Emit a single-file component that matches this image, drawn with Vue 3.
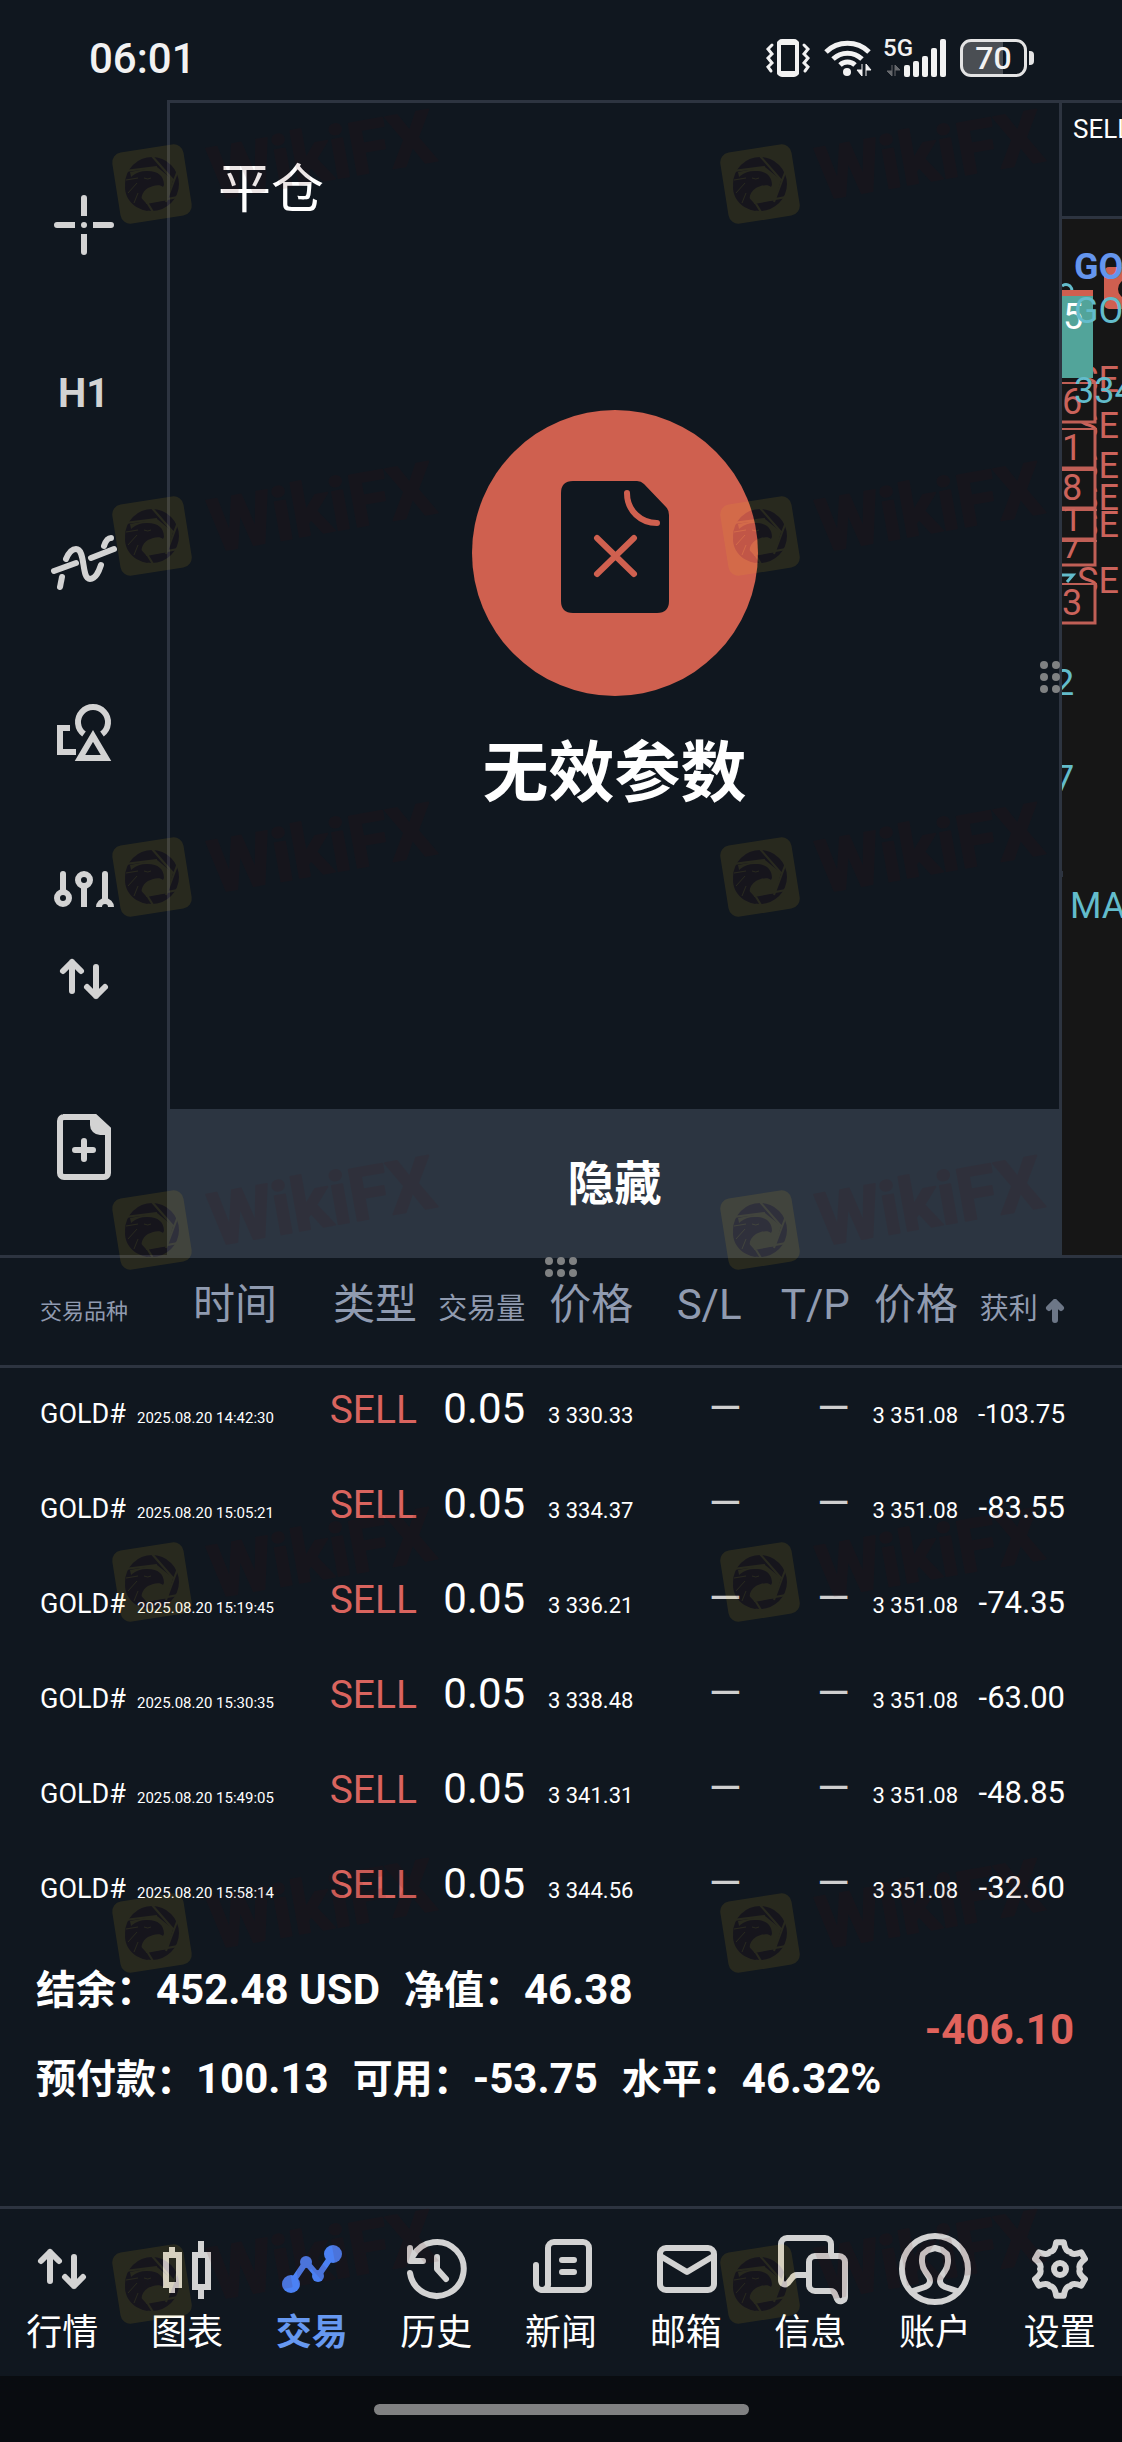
<script setup>
const orders = [
  { time: '2025.08.20 14:42:30', open: '3 330.33', profit: '-103.75' },
  { time: '2025.08.20 15:05:21', open: '3 334.37', profit: '-83.55' },
  { time: '2025.08.20 15:19:45', open: '3 336.21', profit: '-74.35' },
  { time: '2025.08.20 15:30:35', open: '3 338.48', profit: '-63.00' },
  { time: '2025.08.20 15:49:05', open: '3 341.31', profit: '-48.85' },
  { time: '2025.08.20 15:58:14', open: '3 344.56', profit: '-32.60' },
]

const summary = [
  [['结余：', '452.48 USD'], ['净值：', '46.38']],
  [['预付款：', '100.13'], ['可用：', '-53.75'], ['水平：', '46.32%']],
]

// Six-lobed gear outline around (36, 36)
function gearPath() {
  const at = (deg, r) => {
    const a = (deg * Math.PI) / 180
    return `${(36 + r * Math.cos(a)).toFixed(1)} ${(36 + r * Math.sin(a)).toFixed(1)}`
  }
  let d = `M${at(-98, 27)}`
  for (let i = 0; i < 6; i++) {
    const lobe = -90 + i * 60
    d += `L${at(lobe + 8, 27)}Q${at(lobe + 17, 18)} ${at(lobe + 30, 20)}Q${at(lobe + 43, 18)} ${at(lobe + 52, 27)}`
  }
  return d + 'Z'
}

const arrows = ['M24 19V48M15 28L24 19L33 28', 'M48 24V53M39 44L48 53L57 44']

const tabs = [
  { label: '行情', paths: arrows },
  { label: '图表', square: true, paths: ['M15 22H28V52H15Z', 'M21 14V20M21 54V60', 'M44 22H57V54H44Z', 'M50 8V20M50 56V66'] },
  { label: '交易', active: true, paths: ['M15 51L30 29L42 43L57 21'], dots: [[15, 51, 9], [30, 29, 6], [42, 43, 6], [57, 21, 9]] },
  { label: '历史', paths: ['M10 40A27 27 0 1 0 13 23', 'M10 15V28H23', 'M37 24V36L46 46'] },
  { label: '新闻', paths: ['M23 50V15a6 6 0 0 1 6-6H58a6 6 0 0 1 6 6V51a6 6 0 0 1-6 6H17a6 6 0 0 1-6-6V32', 'M23 50a6 6 0 0 1-6 7', 'M37 27H49M37 39H49'] },
  { label: '邮箱', paths: ['M16 15H58a6 6 0 0 1 6 6V51a6 6 0 0 1-6 6H16a6 6 0 0 1-6-6V21a6 6 0 0 1 6-6Z', 'M12 24L37 39L62 24'] },
  { label: '信息', paths: ['M57 22V11a6 6 0 0 0-6-6H13a6 6 0 0 0-6 6V47c0 4 4 6 7 3l4-5a6 6 0 0 1 5-3H33', 'M41 23H65a6 6 0 0 1 6 6V64c0 4-6 6-8 2l-2-5a5 5 0 0 0-5-3H41a6 6 0 0 1-6-6V29a6 6 0 0 1 6-6Z'] },
  { label: '账户', paths: ['M36 3a33 33 0 1 1 0 66a33 33 0 1 1 0-66Z', 'M14 58L26 54C31 52 32 48 30 44L26 38C23 34 22 26 24 21L29 17L36 15L43 17L48 21C50 26 49 34 46 38L42 44C40 48 41 52 46 54L58 58'] },
  { label: '设置', paths: [gearPath(), 'M36 30a6 6 0 1 1 0 12a6 6 0 1 1 0-12Z'] },
]

// Order labels on the price chart; the digit is clipped by its box
const priceBoxes = [
  { top: 163, height: 42, digit: '6', base: 32 },
  { top: 209, height: 42, digit: '1', base: 32 },
  { top: 250, height: 41, digit: '8', base: 31 },
  { top: 290, height: 32, digit: '1', base: 22 },
  { top: 321, height: 27, digit: '7', base: 18 },
  { top: 364, height: 42, digit: '3', base: 32 },
]
const sellMarks = [173, 219, 259, 291, 318, 374]

const watermarkRows = [184, 536, 877, 1230, 1582, 1933, 2284]
const watermarkColumns = [152, 760]
const watermarks = watermarkRows.flatMap((y) => watermarkColumns.map((x) => ({ x, y })))
</script>

<template>
  <div class="app">
    <header class="status">
      <time class="clock">06:01</time>
      <div class="indicators">
        <svg width="46" height="38" viewBox="0 0 46 38" fill="none" stroke="#f2f2f2" stroke-width="3" stroke-linecap="round">
          <rect x="14" y="2" width="18" height="34" rx="3" stroke-width="4" />
          <path d="M14 4H32M14 34H32" stroke-width="4" />
          <path d="M7 6L3 10L7 15L3 19L7 24L3 28L6 32M39 6L43 10L39 15L43 19L39 24L43 28L40 32" />
        </svg>
        <svg width="48" height="38" viewBox="0 0 48 38" fill="none" stroke="#f2f2f2" stroke-width="5">
          <path d="M2 13A31 31 0 0 1 45 13M9 20A21 21 0 0 1 38 20M16 26A11 11 0 0 1 31 26" />
          <circle cx="23" cy="33" r="4" fill="#f2f2f2" stroke="none" />
          <path d="M38 25V37L33 31H38M42 37V25L47 31H42" fill="#f2f2f2" stroke-width="1" />
        </svg>
        <div class="signal">
          <span class="network">5G</span>
          <svg width="62" height="38" viewBox="0 0 62 38">
            <path d="M7 26V37L2 32H7M10 37V26L15 31H10" fill="#66696d" stroke="#66696d" />
            <g fill="#f2f2f2">
              <rect x="19" y="26" width="6" height="12" rx="2" />
              <rect x="28" y="22" width="6" height="16" rx="2" />
              <rect x="37" y="17" width="6" height="21" rx="2" />
              <rect x="46" y="9" width="6" height="29" rx="2" />
              <rect x="55" y="0" width="6" height="38" rx="2" />
            </g>
          </svg>
        </div>
        <div class="battery">
          <span class="level">70</span>
        </div>
      </div>
    </header>

    <section class="workspace">
      <aside class="tools">
        <div class="tool-group scroll">
          <button class="tool" aria-label="十字线">
            <svg width="60" height="60" viewBox="0 0 60 60">
              <path d="M30 3V12M30 57V48M3 30H12M57 30H48" stroke-linecap="round" />
              <path d="M30 10V21M30 50V39M10 30H21M50 30H39" />
              <circle cx="30" cy="30" r="3" fill="currentColor" stroke="none" />
            </svg>
          </button>
          <button class="tool period">H1</button>
          <button class="tool" aria-label="指标">
            <svg width="60" height="60" viewBox="0 0 60 60" stroke-linecap="round">
              <path d="M6 54L8 44" />
              <path d="M12 26C15 19 18 16 22 16C32 16 27 46 36 46C42 46 45 38 47 32" />
              <path d="M50 13C52 7 54 5 57 5M0 38L22 30M37 25L60 16" />
            </svg>
          </button>
          <button class="tool" aria-label="对象">
            <svg width="60" height="60" viewBox="0 0 60 60">
              <path d="M30 32A15 15 0 1 1 48 32" />
              <path d="M39 34L52 56H26Z" />
              <path d="M16 26H6V50H22" />
            </svg>
          </button>
          <button class="tool" aria-label="参数">
            <svg width="60" height="60" viewBox="0 0 60 60" stroke-linecap="round">
              <path d="M9 3V19M30 16V57M51 3V28" />
              <circle cx="9" cy="27" r="6" />
              <circle cx="30" cy="9" r="6" />
              <circle cx="51" cy="36" r="6" />
            </svg>
          </button>
        </div>
        <div class="tool-group actions">
          <button class="tool" aria-label="买卖">
            <svg width="72" height="72" viewBox="0 0 72 72" stroke-linecap="round" stroke-linejoin="round">
              <path v-for="d in arrows" :key="d" :d="d" />
            </svg>
          </button>
          <button class="tool" aria-label="新订单">
            <svg width="60" height="66" viewBox="0 0 60 66">
              <path d="M9 3H41L54 15V59a4 4 0 0 1-4 4H10a4 4 0 0 1-4-4V7a4 4 0 0 1 4-4Z" />
              <path d="M36 3H41L54 15V21H46a10 10 0 0 1-10-10Z" fill="currentColor" stroke="none" />
              <path d="M30 27V45M21 36H39" stroke-linecap="round" />
            </svg>
          </button>
        </div>
      </aside>

      <main class="dialog">
        <h1 class="title">平仓</h1>
        <div class="badge">
          <svg width="108" height="132" viewBox="0 0 108 132">
            <path d="M12 0H76q4 0 7 3L105 26q3 3 3 8V120q0 12-12 12H12q-12 0-12-12V12Q0 0 12 0Z" fill="#10171f" />
            <path d="M66 12C66 30 80 42 96 42M36 57L73 93M73 57L36 93" fill="none" stroke="#cf604f" stroke-width="6" stroke-linecap="round" />
          </svg>
        </div>
        <p class="message">无效参数</p>
        <button class="hide">隐藏</button>
        <svg class="grip-side" width="20" height="32" viewBox="0 0 20 32" fill="#7f8182">
          <template v-for="y in [4, 16, 28]" :key="y">
            <circle cx="4" :cy="y" r="4" />
            <circle cx="16" :cy="y" r="4" />
          </template>
        </svg>
      </main>

      <aside class="chart">
        <div class="quote">SELL</div>
        <svg class="plot" width="60" height="1036" font-size="36">
          <path d="M0 67q4-3 8 0q2 2 2 5" fill="none" stroke="#63bccb" stroke-width="3" />
          <rect x="42" y="48" width="30" height="42" rx="5" fill="#cf5f50" />
          <circle cx="66" cy="70" r="8" fill="none" stroke="#161616" stroke-width="4" />
          <text x="12" y="60" fill="#6495ed" font-weight="700">GO</text>
          <rect y="71" width="31" height="7" fill="#cf5f50" />
          <g fill="#cb635b">
            <text v-for="y in sellMarks" :key="y" x="15" :y="y">SE</text>
          </g>
          <rect y="77" width="31" height="82" fill="#52a49a" />
          <text x="1" y="110" fill="#fff">5</text>
          <text x="12" y="104" fill="#63bccb">GO</text>
          <svg v-for="box in priceBoxes" :key="box.top" :y="box.top" width="35" :height="box.height" overflow="hidden">
            <rect x="-20" y="-2" width="53" :height="box.height" fill="#161616" stroke="#c05f56" stroke-width="3" />
            <path d="M-5 0H35" stroke="#c05f56" stroke-width="4" />
            <text x="0" :y="box.base" fill="#cb635b">{{ box.digit }}</text>
          </svg>
          <g fill="#63bccb">
            <path d="M0 356H11L5 363" fill="none" stroke="#63bccb" stroke-width="3" />
            <text x="12" y="184">334</text>
            <text x="-8" y="476">2</text>
            <text x="-8" y="572">7</text>
            <text x="8" y="699">MA</text>
          </g>
          <rect y="652" width="1" height="6" fill="#2d3440" />
        </svg>
      </aside>
    </section>

    <section class="positions">
      <svg class="grip-top" width="32" height="20" viewBox="0 0 32 20" fill="#7f8182">
        <template v-for="x in [4, 16, 28]" :key="x">
          <circle :cx="x" cy="4" r="4" />
          <circle :cx="x" cy="16" r="4" />
        </template>
      </svg>
      <table>
        <colgroup>
          <col class="c-symbol" /><col class="c-time" /><col class="c-type" /><col /><col /><col /><col /><col /><col class="c-profit" />
        </colgroup>
        <thead>
          <tr>
            <th class="symbol tiny">交易品种</th>
            <th>时间</th>
            <th>类型</th>
            <th class="medium">交易量</th>
            <th>价格</th>
            <th>S/L</th>
            <th>T/P</th>
            <th>价格</th>
            <th class="profit medium">
              获利
              <svg width="20" height="24" viewBox="0 0 20 24" fill="none" stroke="#6d7787" stroke-width="6" stroke-linecap="round" stroke-linejoin="round">
                <path d="M10 21V5M4 9L10 3L16 9" />
              </svg>
            </th>
          </tr>
        </thead>
        <tbody>
          <tr v-for="order in orders" :key="order.time">
            <td class="symbol">GOLD#</td>
            <td class="time">{{ order.time }}</td>
            <td class="type">SELL</td>
            <td>0.05</td>
            <td class="price">{{ order.open }}</td>
            <td class="none">—</td>
            <td class="none">—</td>
            <td class="price">3 351.08</td>
            <td class="profit" :class="{ long: order.profit.length > 6 }">{{ order.profit }}</td>
          </tr>
        </tbody>
      </table>
      <div class="summary">
        <div class="balance">
          <p v-for="(line, i) in summary" :key="i">
            <span v-for="[label, value] in line" :key="label">{{ label }}<b>{{ value }}</b></span>
          </p>
        </div>
        <strong class="total">-406.10</strong>
      </div>
    </section>

    <nav class="tabs">
      <a v-for="tab in tabs" :key="tab.label" href="#" class="tab" :class="{ active: tab.active, square: tab.square }">
        <svg width="72" height="72" viewBox="0 0 72 72">
          <path v-for="d in tab.paths" :key="d" :d="d" />
          <circle v-for="[x, y, r] in tab.dots" :key="x" :cx="x" :cy="y" :r="r" fill="currentColor" stroke="none" />
        </svg>
        <span>{{ tab.label }}</span>
      </a>
    </nav>
    <footer class="home"><span class="home-bar"></span></footer>

    <svg class="watermarks" aria-hidden="true">
      <g v-for="mark in watermarks" :key="`${mark.x}-${mark.y}`" opacity="0.1" :transform="`translate(${mark.x} ${mark.y})`">
        <rect x="-36" y="-36" width="72" height="72" rx="10" fill="#fac81e" transform="rotate(-9)" />
        <circle r="27" fill="#500a0a" />
        <path d="M-22 -12L5 -17L21 -4L15 16L-6 19L-18 6Z" fill="#fac81e" />
        <path d="M0 -28L21 -4M-27 -13L5 -17M26 -14L14 18M26 13L-6 19M1 28L-7 15" stroke="#fac81e" stroke-width="2" />
        <path d="M-27 3C-25 -6 -15 -14 -4 -13C6 -13 12 -8 12 1L11 3C8 0 2 1 -4 4C-10 8 -12 14 -9 20L-4 27C-18 25 -27 15 -27 3Z" fill="#500a0a" />
        <path d="M-26 -4L-14 -6M-24 9L-15 -1M-18 19L-14 9M-8 -6Q-4 -4 -1 -6" fill="none" stroke="#fac81e" stroke-width="1" />
        <text x="62" y="16" transform="rotate(-10 62 16)" class="mark-text">WikiFX</text>
      </g>
    </svg>
  </div>
</template>

<style>
body {
  margin: 0;
  background: #10171f;
}
</style>

<style scoped>
.app {
  position: relative;
  overflow: hidden;
  background: #10171f;
  color: #fff;
  font-family: Roboto, "Noto Sans CJK SC", sans-serif;
}

button {
  padding: 0;
  border: 0;
  background: none;
  color: inherit;
  font-family: inherit;
}

.status {
  display: flex;
  justify-content: space-between;
  align-items: center;
  box-sizing: border-box;
  height: 100px;
  padding: 16px 88px 0 89px;
  color: #f2f2f2;
}

.clock {
  font-size: 42px;
  font-weight: 500;
}

.indicators {
  display: flex;
  align-items: center;
  gap: 13px;
}

.signal {
  position: relative;
  height: 38px;
}

.network {
  position: absolute;
  top: 0;
  left: -2px;
  font-size: 24px;
  font-weight: 500;
  line-height: 18px;
}

.battery {
  position: relative;
  display: flex;
  justify-content: center;
  align-items: center;
  box-sizing: border-box;
  width: 67px;
  height: 38px;
  margin-right: 7px;
  border: 3px solid #e4e4e4;
  border-radius: 11px;
  background: linear-gradient(90deg, #4a4e53 66%, #10171f 66%);
}

.battery::after {
  content: "";
  position: absolute;
  top: 9px;
  right: -10px;
  width: 5px;
  height: 14px;
  border-radius: 0 4px 4px 0;
  background: #e4e4e4;
}

.level {
  font-size: 32px;
  font-weight: 500;
  line-height: 32px;
}

.workspace {
  display: grid;
  grid-template-columns: 167px 1fr 60px;
}

.tools {
  border-bottom: 3px solid #2d3440;
  color: #d3d3d3;
}

.tool-group {
  display: flex;
  flex-direction: column;
}

.scroll {
  box-sizing: border-box;
  height: 807px;
  padding-top: 40px;
  overflow: hidden;
}

.tool {
  display: flex;
  flex-shrink: 0;
  justify-content: center;
  align-items: center;
  height: 169px;
}

.actions {
  gap: 24px;
}

.actions .tool {
  height: 144px;
}

.tool svg {
  overflow: visible;
  fill: none;
  stroke: currentColor;
  stroke-width: 6px;
}

.period {
  font-family: "Liberation Sans Narrow", Roboto, sans-serif;
  font-size: 40px;
  font-weight: 700;
}

.dialog {
  position: relative;
  display: flex;
  flex-direction: column;
  align-items: center;
  border: 3px solid #2d3440;
  border-bottom: 0;
}

.title {
  align-self: flex-start;
  margin: 57px 0 0 48px;
  font-size: 53px;
  font-weight: 400;
  line-height: 60px;
}

.badge {
  display: flex;
  justify-content: center;
  align-items: center;
  box-sizing: border-box;
  width: 286px;
  height: 286px;
  margin-top: 190px;
  padding-bottom: 12px;
  border-radius: 50%;
  background: #cf604f;
}

.message {
  margin: 38px 0 295px;
  font-size: 66px;
  font-weight: 700;
  line-height: 80px;
}

.hide {
  align-self: stretch;
  height: 149px;
  margin: 0 -3px;
  background: #2c3541;
  font-size: 47px;
  font-weight: 700;
  line-height: 48px;
}

.grip-side {
  position: absolute;
  top: 558px;
  right: -1px;
}

.chart {
  display: flex;
  flex-direction: column;
  overflow: hidden;
  border-top: 3px solid #2d3440;
  border-bottom: 3px solid #2d3440;
  background: #161616;
}

.quote {
  box-sizing: border-box;
  height: 116px;
  padding: 8px 0 0 11px;
  border-bottom: 3px solid #2d3440;
  background: #10171f;
  font-size: 26px;
  line-height: 36px;
}

.plot {
  display: block;
  overflow: hidden;
}

.positions {
  position: relative;
}

.grip-top {
  position: absolute;
  top: -1px;
  left: 50%;
  transform: translateX(-50%);
}

table {
  width: 100%;
  border-spacing: 0;
  table-layout: fixed;
}

.c-symbol {
  width: 127px;
}

.c-time {
  width: 150px;
}

.c-type {
  width: 140px;
}

.c-profit {
  width: 164px;
}

th,
td {
  padding: 16px 0 0;
  font-size: 42px;
  font-weight: 400;
  line-height: 49px;
  text-align: right;
  vertical-align: baseline;
  white-space: nowrap;
}

th {
  height: 85px;
  padding-top: 22px;
  border-bottom: 3px solid #2d3440;
  color: #909bb0;
}

td {
  height: 79px;
}

th.tiny {
  font-size: 22px;
}

th.medium {
  font-size: 29px;
}

th svg {
  margin-bottom: -4px;
}

.symbol {
  padding-left: 40px;
  font-size: 27px;
  text-align: left;
}

.time {
  padding-left: 10px;
  font-size: 15px;
  text-align: left;
}

.type {
  color: #d9645e;
  font-size: 39px;
}

.price {
  font-size: 22px;
}

.none {
  color: #cfcfcf;
}

.profit {
  padding-right: 57px;
  font-size: 31px;
}

.profit.long {
  font-size: 26px;
}

.summary {
  display: flex;
  justify-content: space-between;
  align-items: center;
  padding: 0 48px 82px 36px;
}

.balance {
  padding-top: 8px;
}

.balance p {
  display: flex;
  gap: 24px;
  margin: 0;
  font-size: 40px;
  font-weight: 700;
  line-height: 89px;
}

.balance b {
  font-size: 42px;
  font-weight: 700;
  line-height: 1;
}

.total {
  margin-bottom: 4px;
  color: #e0635c;
  font-size: 42px;
  font-weight: 700;
}

.tabs {
  display: grid;
  grid-template-columns: repeat(9, 1fr);
  border-top: 3px solid #2d3440;
}

.tab {
  display: flex;
  flex-direction: column;
  align-items: center;
  gap: 4px;
  padding: 24px 0 19px;
  color: #fff;
  font-size: 36px;
  line-height: 48px;
  text-decoration: none;
}

.tab svg {
  overflow: visible;
  color: #d3d3d3;
  fill: none;
  stroke: currentColor;
  stroke-width: 6px;
  stroke-linecap: round;
  stroke-linejoin: round;
}

.tab.square svg {
  stroke-linecap: butt;
  stroke-linejoin: miter;
}

.tab.active {
  color: #6698f0;
  font-weight: 700;
}

.tab.active svg {
  color: #4b81f4;
}

.home {
  display: flex;
  justify-content: center;
  align-items: center;
  height: 66px;
  background: #090c10;
}

.home-bar {
  width: 375px;
  height: 11px;
  border-radius: 6px;
  background: #808182;
}

.watermarks {
  position: absolute;
  top: 0;
  left: 0;
  width: 100%;
  height: 100%;
  pointer-events: none;
}

.mark-text {
  fill: #500a0a;
  stroke: #500a0a;
  stroke-width: 2px;
  stroke-linejoin: round;
  font-size: 73px;
  font-weight: 700;
}
</style>
